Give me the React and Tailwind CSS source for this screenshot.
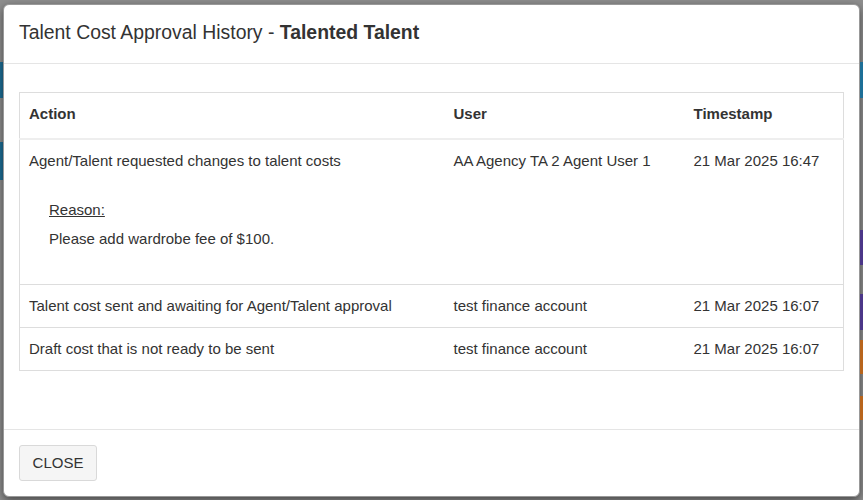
import React from 'react';

const rows = [
  {
    action: 'Agent/Talent requested changes to talent costs',
    user: 'AA Agency TA 2 Agent User 1',
    time: '21 Mar 2025 16:47',
    reason: 'Please add wardrobe fee of $100.',
  },
  {
    action: 'Talent cost sent and awaiting for Agent/Talent approval',
    user: 'test finance account',
    time: '21 Mar 2025 16:07',
  },
  {
    action: 'Draft cost that is not ready to be sent',
    user: 'test finance account',
    time: '21 Mar 2025 16:07',
  },
];

export default function App() {
  return (
    <div
      className="flex w-[863px] h-[500px] overflow-hidden bg-[#8e8e8e] text-[#333]"
      style={{ fontFamily: '"Liberation Sans", Arial, sans-serif' }}
    >
      {/* page behind the backdrop, peeking at the left edge */}
      <div className="w-[3px] shrink-0 flex flex-col pt-[62px] gap-[44px]">
        <div className="h-[36px] bg-[#1d6f97]" />
        <div className="h-[38px] bg-[#1d6f97]" />
      </div>

      <div className="pt-[4px] shrink-0">
        {/* Modal */}
        <div className="w-[857px] h-[493px] bg-white rounded-[6px] border border-[#999] flex flex-col shadow-[0_3px_9px_rgba(0,0,0,0.5)]">
          {/* Header */}
          <div className="h-[59px] flex items-center px-[15px] pb-[5px] border-b border-[#e5e5e5] shrink-0">
            <h4 className="text-[19.4px] leading-[22px] font-normal">
              Talent Cost Approval History - <span className="font-bold">Talented Talent</span>
            </h4>
          </div>

          {/* Body */}
          <div className="flex-1 pt-[28px] px-[15px]">
            <table className="w-full border border-[#ddd] border-collapse text-[15px] leading-[20px]">
              <thead>
                <tr className="border-b-2 border-[#eee]">
                  <th className="w-[425px] text-left font-bold pl-[9px] pt-[11px] pb-[14px]">Action</th>
                  <th className="w-[240px] text-left font-bold pl-[9px] pt-[11px] pb-[14px]">User</th>
                  <th className="text-left font-bold pl-[9px] pt-[11px] pb-[14px]">Timestamp</th>
                </tr>
              </thead>
              <tbody>
                {rows.map((r, i) => (
                  <tr key={i} className="border-t border-[#ddd] align-top">
                    <td className="pl-[9px] pr-2 pt-[11px] pb-[11px]">
                      <div>{r.action}</div>
                      {r.reason && (
                        <div className="pl-[20px] pt-[29px] pb-[24px] flex flex-col gap-[9px]">
                          <span className="underline">Reason:</span>
                          <span>{r.reason}</span>
                        </div>
                      )}
                    </td>
                    <td className="pl-[9px] pt-[11px] pb-[11px]">{r.user}</td>
                    <td className="pl-[9px] pt-[11px] pb-[11px]">{r.time}</td>
                  </tr>
                ))}
              </tbody>
            </table>
          </div>

          {/* Footer */}
          <div className="border-t border-[#e5e5e5] pt-[15px] pb-[15px] px-[15px] shrink-0">
            <button className="h-[36px] w-[78px] bg-[#f5f5f5] border border-[#d9d9d9] rounded-[3px] text-[15px] text-[#333]">
              CLOSE
            </button>
          </div>
        </div>
      </div>

      {/* page behind the backdrop, peeking at the right edge */}
      <div className="w-[3px] shrink-0 flex flex-col pt-[62px]">
        <div className="h-[36px] bg-[#1d6f97]" />
        <div className="h-[35px] mt-[132px] bg-[#4b3688]" />
        <div className="h-[36px] mt-[29px] bg-[#4b3688]" />
        <div className="h-[34px] mt-[10px] bg-[#b8651c]" />
        <div className="h-[24px] mt-[22px] bg-[#b8651c]" />
      </div>
    </div>
  );
}
